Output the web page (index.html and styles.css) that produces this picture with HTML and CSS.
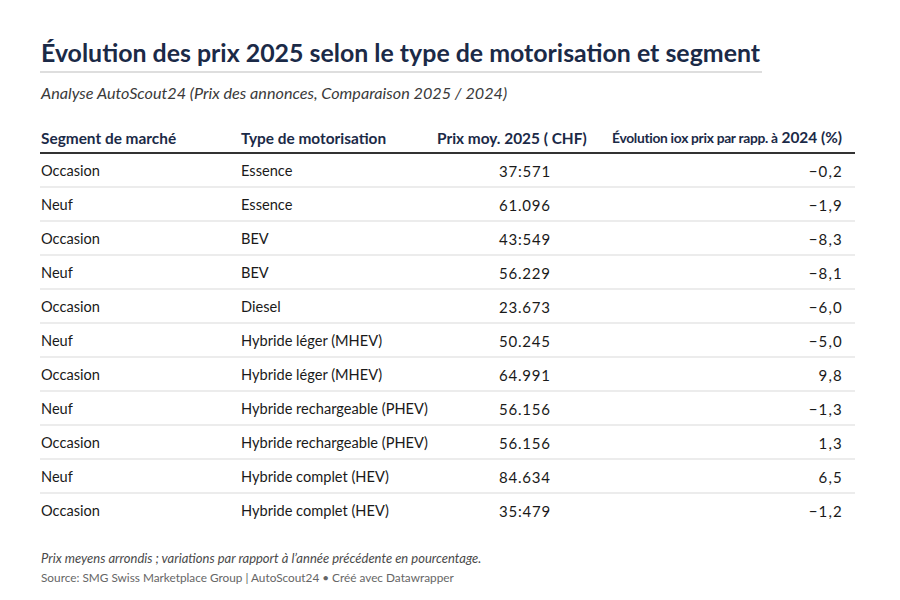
FILE: index.html
```html
<!DOCTYPE html>
<html lang="fr">
<head>
<meta charset="utf-8">
<title>Évolution des prix 2025</title>
<link rel="stylesheet" href="styles.css">
</head>
<body>
<main class="chart">
  <h1 class="title">Évolution des prix 2025 selon le type de motorisation et segment</h1>
  <p class="subtitle">Analyse AutoScout24 (Prix des annonces, Comparaison 2025 / 2024)</p>
  <table class="data">
    <thead>
      <tr>
        <th class="c-seg">Segment de marché</th>
        <th class="c-type">Type de motorisation</th>
        <th class="c-price">Prix moy. 2025 ( CHF)</th>
        <th class="c-evo"><span class="narrow">Évolution iox prix par rapp. à</span> 2024 (%)</th>
      </tr>
    </thead>
    <tbody>
      <tr><td>Occasion</td><td>Essence</td><td class="num">37:571</td><td class="evo">−0,2</td></tr>
      <tr><td>Neuf</td><td>Essence</td><td class="num">61.096</td><td class="evo">−1,9</td></tr>
      <tr><td>Occasion</td><td>BEV</td><td class="num">43:549</td><td class="evo">−8,3</td></tr>
      <tr><td>Neuf</td><td>BEV</td><td class="num">56.229</td><td class="evo">−8,1</td></tr>
      <tr><td>Occasion</td><td>Diesel</td><td class="num">23.673</td><td class="evo">−6,0</td></tr>
      <tr><td>Neuf</td><td>Hybride léger (MHEV)</td><td class="num">50.245</td><td class="evo">−5,0</td></tr>
      <tr><td>Occasion</td><td>Hybride léger (MHEV)</td><td class="num">64.991</td><td class="evo">9,8</td></tr>
      <tr><td>Neuf</td><td>Hybride rechargeable (PHEV)</td><td class="num">56.156</td><td class="evo">−1,3</td></tr>
      <tr><td>Occasion</td><td>Hybride rechargeable (PHEV)</td><td class="num">56.156</td><td class="evo">1,3</td></tr>
      <tr><td>Neuf</td><td>Hybride complet (HEV)</td><td class="num">84.634</td><td class="evo">6,5</td></tr>
      <tr><td>Occasion</td><td>Hybride complet (HEV)</td><td class="num">35:479</td><td class="evo">−1,2</td></tr>
    </tbody>
  </table>
  <footer class="notes">
    <p class="note">Prix meyens arrondis ; variations par rapport à l’année précédente en pourcentage.</p>
    <p class="source">Source: SMG Swiss Marketplace Group | AutoScout24 • Créé avec Datawrapper</p>
  </footer>
</main>
</body>
</html>
```

FILE: styles.css
```css
html, body {
  margin: 0;
  padding: 0;
  background: #ffffff;
}
body {
  font-family: Lato, "Open Sans", "Liberation Sans", sans-serif;
  color: #1d1d1d;
}
.chart {
  padding: 34px 45px 0 40px;
}
.title {
  margin: 0;
  display: inline-block;
  font-size: 24.9px;
  font-weight: 700;
  color: #1b2a47;
  line-height: 36px;
  padding: 0 2px 1px 1px;
  border-bottom: 2px solid #dedede;
}
.subtitle {
  margin: 10px 0 0 1px;
  font-size: 16.2px;
  font-style: italic;
  color: #3a3a3a;
  line-height: 20px;
}
.data {
  width: 815px;
  margin-top: 24px;
  border-collapse: collapse;
}
.data th {
  text-align: left;
  font-size: 15.4px;
  font-weight: 700;
  color: #1b2a47;
  padding: 0 0 4px 1px;
  border-bottom: 2px solid #333;
  line-height: 20px;
  white-space: nowrap;
}
.data th.c-seg { width: 199px; }
.data th.c-type { width: 195px; }
.data th.c-price { width: 170px; }
.data th.c-evo { text-align: right; padding-right: 13px; }
.narrow {
  font-size: 13.8px;
  letter-spacing: -0.3px;
}
.data td {
  font-size: 14.6px;
  color: #1a1a1a;
  height: 30px;
  padding: 2px 0 0 1px;
  border-bottom: 2px solid #ececec;
  line-height: 20px;
  white-space: nowrap;
}
.data tbody tr:last-child td { border-bottom: none; }
.data td.num { padding-left: 63px; letter-spacing: 0.8px; font-size: 15px; }
.data td.evo { text-align: right; padding-right: 12px; letter-spacing: 1.2px; font-size: 15px; }
.notes {
  margin-top: 22px;
  padding-left: 1px;
}
.note {
  margin: 0;
  font-size: 13px;
  font-style: italic;
  color: #4a4a4a;
  line-height: 20px;
}
.source {
  margin: 0;
  font-size: 11.8px;
  color: #666;
  line-height: 20px;
}
```
